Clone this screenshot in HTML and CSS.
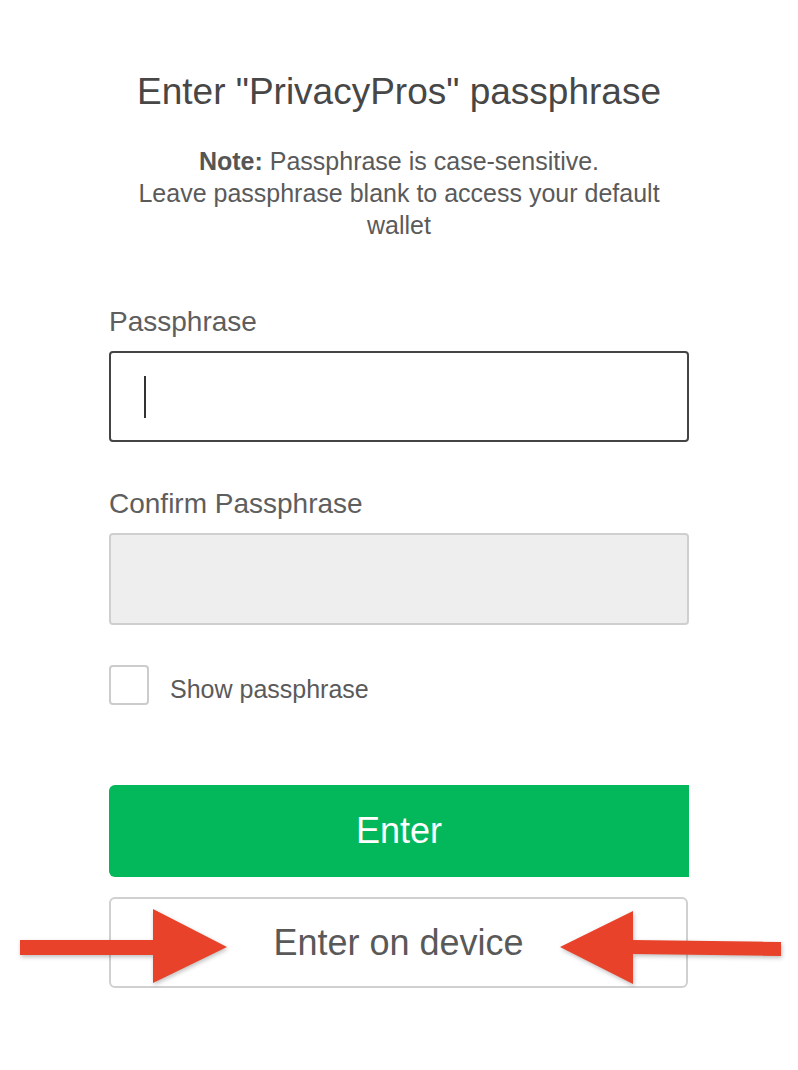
FILE: index.html
```html
<!DOCTYPE html>
<html>
<head>
<meta charset="utf-8">
<link rel="stylesheet" href="styles.css">
</head>
<body>
<div class="page">
  <h1 class="title">Enter "PrivacyPros" passphrase</h1>
  <p class="note"><b>Note:</b> Passphrase is case-sensitive.<br>Leave passphrase blank to access your default wallet</p>

  <div class="field field-first">
    <label class="label">Passphrase</label>
    <div class="input input-active"><span class="caret"></span></div>
  </div>

  <div class="field field-second">
    <label class="label">Confirm Passphrase</label>
    <div class="input input-disabled"></div>
  </div>

  <div class="check-row">
    <span class="checkbox"></span>
    <span class="check-label">Show passphrase</span>
  </div>

  <div class="btn btn-primary">Enter</div>
  <div class="btn-wrap">
    <div class="btn btn-outline">Enter on device</div>
    <svg class="arrow arrow-left" width="215" height="80" viewBox="0 0 215 80">
      <path d="M0 31 L133 31 L133 0 L207 38 L133 74 L133 46 L0 46 Z" fill="#e8432a"/>
    </svg>
    <svg class="arrow arrow-right" width="233" height="80" viewBox="0 0 233 80">
      <path d="M8 37 L81 1 L81 30 L229 32 L229 46 L81 44 L81 74 Z" fill="#e8432a"/>
    </svg>
  </div>
</div>
</body>
</html>
```

FILE: styles.css
```css
* { box-sizing: border-box; }
html, body {
  margin: 0;
  padding: 0;
  background: #ffffff;
}
body {
  font-family: "Liberation Sans", Arial, sans-serif;
  color: #555555;
}
.page {
  width: 580px;
  margin: 0 auto;
  padding-top: 72px;
  display: flex;
  flex-direction: column;
}
.title {
  margin: 0;
  font-size: 37px;
  line-height: 40px;
  font-weight: 400;
  text-align: center;
  color: #474747;
  white-space: nowrap;
}
.note {
  margin: 33px 0 0;
  padding: 0 18px;
  font-size: 25px;
  line-height: 32px;
  text-align: center;
  color: #5a5a5a;
}
.note b { font-weight: 700; color: #555; }
.field {
  display: flex;
  flex-direction: column;
}
.field-first { margin-top: 66px; }
.field-second { margin-top: 47px; }
.label {
  font-size: 28px;
  line-height: 30px;
  color: #5e5e5e;
  margin-bottom: 14px;
}
.input {
  height: 91px;
  border-radius: 4px;
  display: flex;
  align-items: center;
  padding-left: 33px;
}
.input-active {
  border: 2px solid #444444;
  background: #fff;
}
.input-disabled {
  height: 92px;
  border: 2px solid #cfcfcf;
  background: #eeeeee;
}
.caret {
  width: 2px;
  height: 42px;
  background: #333;
}
.check-row {
  margin-top: 40px;
  display: flex;
  align-items: center;
  height: 40px;
}
.checkbox {
  width: 40px;
  height: 40px;
  border: 2px solid #cccccc;
  border-radius: 4px;
  background: #fff;
}
.check-label {
  margin-left: 21px;
  padding-top: 9px;
  font-size: 25px;
  color: #5a5a5a;
}
.btn {
  height: 92px;
  display: flex;
  align-items: center;
  justify-content: center;
  font-size: 36px;
}
.btn-primary {
  margin-top: 80px;
  background: #03b75b;
  color: #ffffff;
  border-radius: 6px 0 0 6px;
}
.btn-wrap {
  position: relative;
  margin-top: 20px;
}
.btn-outline {
  height: 91px;
  border: 2px solid #d0d0d0;
  border-radius: 6px;
  color: #595959;
  width: 579px;
}
.arrow {
  position: absolute;
  filter: drop-shadow(1px 2px 2px rgba(0,0,0,0.25));
}
.arrow-left {
  left: -89px;
  top: 12px;
}
.arrow-right {
  left: 443px;
  top: 13px;
}
```
